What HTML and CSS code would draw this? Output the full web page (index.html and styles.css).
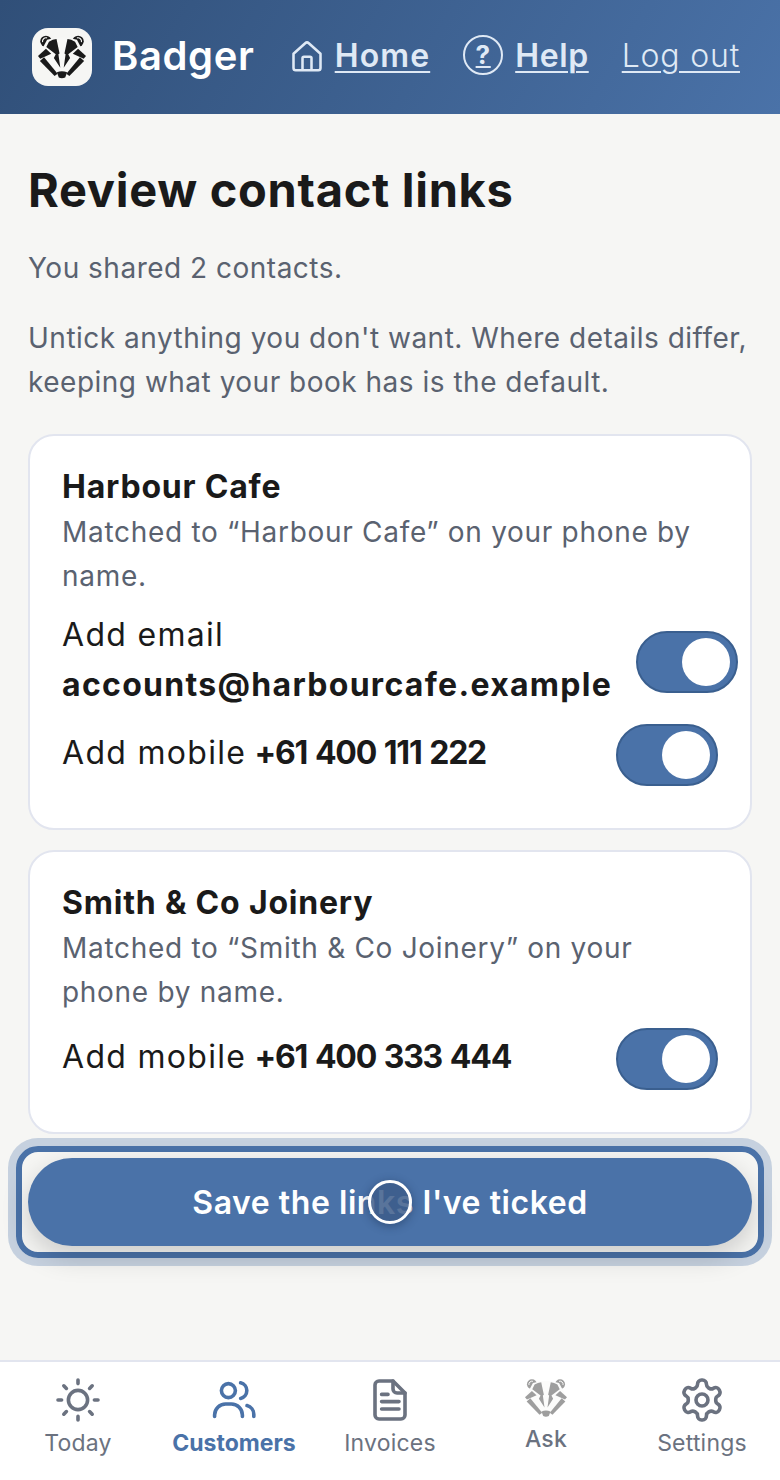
FILE: index.html
```html
<!DOCTYPE html>
<html lang="en">
<head>
    <meta charset="UTF-8">
    <meta name="viewport" content="width=device-width, initial-scale=1.0">
    <title>Badger - Review contact links</title>
    <link rel="stylesheet" href="styles.css">
</head>
<body>
    <svg class="defs" width="0" height="0" aria-hidden="true">
        <symbol id="badger" viewBox="0 0 127 115">
            <circle cx="21" cy="16" r="15"/>
            <circle cx="106" cy="16" r="15"/>
            <path class="ear-in" d="M12 18a9.500 9.500 0 0 1 12-11"/>
            <path class="ear-in" d="M115 18a9.500 9.500 0 0 0-12-11"/>
            <path class="head" d="M24 12Q63 0 103 12L118 40 122 56 70 112H57L5 56 9 40Z"/>
            <path d="M29 17Q39 11 49 10L57 48 54 50 59 86 42 60 47 50 22 31Z"/>
            <path d="M98 17Q88 11 78 10L70 48 73 50 68 86 85 60 80 50 105 31Z"/>
            <path d="M21 36 0 55 6 62 35 49Z"/>
            <path d="M106 36 127 55 121 62 92 49Z"/>
            <path d="M5 68 44 108 52 102 16 58Z"/>
            <path d="M122 68 83 108 75 102 111 58Z"/>
            <path d="M50 98Q63 92 77 98L72 112Q63 116 55 112Z"/>
        </symbol>
    </svg>

    <header class="topbar">
        <a class="brand" href="#">
            <span class="brand-logo"><svg width="48" height="44"><use href="#badger"/></svg></span>
            <span class="brand-name">Badger</span>
        </a>
        <nav class="top-links">
            <a class="top-link link-home" href="#">
                <svg class="home-icon" width="36" height="36" viewBox="0 0 24 24"><path d="M3 10.500 10.800 3.500a1.800 1.800 0 0 1 2.400 0L21 10.500V20a1.500 1.500 0 0 1-1.500 1.500h-15A1.500 1.500 0 0 1 3 20Z"/><path d="M9 21.500V13.500a1 1 0 0 1 1-1h4a1 1 0 0 1 1 1v8"/></svg>
                <span class="under">Home</span>
            </a>
            <a class="top-link link-help" href="#">
                <span class="help-ring"><span class="help-mark">?</span></span>
                <span class="under">Help</span>
            </a>
            <a class="top-link top-link-plain" href="#"><span class="under">Log out</span></a>
        </nav>
    </header>

    <main class="page">
        <h1>Review contact links</h1>
        <p class="lead">You shared 2 contacts.</p>
        <p class="lead">Untick anything you don't want. Where details differ, keeping what your book has is the default.</p>

        <section class="card">
            <h2>Harbour Cafe</h2>
            <p class="match">Matched to “Harbour Cafe” on your phone by name.</p>
            <div class="link-row">
                <div class="link-text">Add email <strong>accounts@harbourcafe.example</strong></div>
                <span class="toggle"><span class="knob"></span></span>
            </div>
            <div class="link-row">
                <div class="link-text">Add mobile <strong class="num">+61 400 111 222</strong></div>
                <span class="toggle"><span class="knob"></span></span>
            </div>
        </section>

        <section class="card">
            <h2>Smith &amp; Co Joinery</h2>
            <p class="match">Matched to “Smith &amp; Co Joinery” on your phone by name.</p>
            <div class="link-row">
                <div class="link-text">Add mobile <strong class="num">+61 400 333 444</strong></div>
                <span class="toggle"><span class="knob"></span></span>
            </div>
        </section>

        <div class="save-focus">
            <button class="save-btn" type="button">Save the links I've ticked</button>
            <span class="touch-dot"></span>
        </div>
    </main>

    <nav class="tabbar">
        <a class="tab" href="#">
            <svg class="tab-icon" viewBox="0 0 24 24"><circle cx="12" cy="12" r="4.800"/><path d="M12 2v1.800M12 20.200v1.800M2 12h1.800M20.200 12H22M4.900 4.900l1.300 1.300M17.800 17.800l1.300 1.300M4.900 19.100l1.300-1.300M17.800 6.200l1.300-1.300"/></svg>
            <span>Today</span>
        </a>
        <a class="tab tab-on" href="#">
            <svg class="tab-icon" viewBox="0 0 24 24"><circle cx="9.200" cy="7.300" r="3.500"/><path d="M2.300 20.200v-.7a5.500 5.500 0 0 1 5.500-5.500h2.900a5.500 5.500 0 0 1 5.500 5.500v.7"/><path d="M15.300 3.400a4 4 0 0 1 0 7.800"/><path d="M18.500 14.800a4.500 4.500 0 0 1 3.400 4.400v1"/></svg>
            <span>Customers</span>
        </a>
        <a class="tab" href="#">
            <svg class="tab-icon" viewBox="0 0 24 24"><path d="M6.500 2.500h7l6 6v11a2 2 0 0 1-2 2h-11a2 2 0 0 1-2-2v-15a2 2 0 0 1 2-2Z"/><path d="M13.500 2.500v4a2 2 0 0 0 2 2h4"/><path d="M7.800 9.200H11M7.800 12.800h8.700M7.800 16.500h8.700"/></svg>
            <span>Invoices</span>
        </a>
        <a class="tab tab-ask" href="#">
            <svg class="ask-icon" width="42" height="40"><use href="#badger"/></svg>
            <span>Ask</span>
        </a>
        <a class="tab" href="#">
            <svg class="tab-icon" viewBox="0 0 24 24"><path d="M12.220 2h-.44a2 2 0 0 0-2 2v.18a2 2 0 0 1-1 1.730l-.43.250a2 2 0 0 1-2 0l-.15-.08a2 2 0 0 0-2.730.730l-.22.380a2 2 0 0 0 .73 2.730l.15.100a2 2 0 0 1 1 1.720v.510a2 2 0 0 1-1 1.740l-.15.090a2 2 0 0 0-.73 2.730l.22.380a2 2 0 0 0 2.730.730l.15-.08a2 2 0 0 1 2 0l.43.250a2 2 0 0 1 1 1.730V20a2 2 0 0 0 2 2h.44a2 2 0 0 0 2-2v-.18a2 2 0 0 1 1-1.730l.43-.25a2 2 0 0 1 2 0l.15.080a2 2 0 0 0 2.730-.73l.22-.39a2 2 0 0 0-.73-2.730l-.15-.08a2 2 0 0 1-1-1.740v-.5a2 2 0 0 1 1-1.740l.15-.09a2 2 0 0 0 .73-2.730l-.22-.38a2 2 0 0 0-2.730-.73l-.15.08a2 2 0 0 1-2 0l-.43-.25a2 2 0 0 1-1-1.730V4a2 2 0 0 0-2-2Z"/><circle cx="12" cy="12" r="3"/></svg>
            <span>Settings</span>
        </a>
    </nav>
</body>
</html>
```

FILE: styles.css
```css
* {
    box-sizing: border-box;
}

html, body {
    margin: 0;
    height: 100%;
}

body {
    display: flex;
    flex-direction: column;
    height: 1480px;
    overflow: hidden;
    font-family: Inter, "Noto Sans", sans-serif;
    background: #f6f6f4;
    color: #1a1a1a;
}

a {
    color: inherit;
    text-decoration: none;
}

.defs {
    position: absolute;
}

#badger path, #badger circle {
    fill: #1a1a1a;
}

#badger .head {
    fill: #f8f8f6;
}

#badger .ear-in {
    fill: none;
    stroke: #f6f6f4;
    stroke-width: 3;
}

/* top bar */
.topbar {
    display: flex;
    align-items: center;
    height: 114px;
    padding: 0 40px 0 32px;
    background: linear-gradient(120deg, #304f78 0%, #4a72a8 100%);
    color: #fff;
}

.brand {
    display: flex;
    align-items: center;
    gap: 20px;
    font-size: 40px;
    font-weight: 600;
    letter-spacing: 0.6px;
}

.brand-name {
    margin-bottom: 3px;
}

.brand-logo {
    display: flex;
    align-items: center;
    justify-content: center;
    width: 60px;
    height: 58px;
    border-radius: 16px;
    background: #f6f6f4;
}

.top-links {
    display: flex;
    align-items: center;
    margin-left: auto;
    margin-bottom: 4px;
    gap: 33px;
    color: #dfe9f5;
    font-size: 32px;
    font-weight: 600;
}

.top-link {
    display: flex;
    align-items: center;
    gap: 12px;
}

.link-home {
    gap: 10px;
    letter-spacing: 1.100px;
}

.link-help {
    letter-spacing: 0.6px;
}

.top-link-plain {
    font-weight: 300;
    letter-spacing: 0.8px;
}

.under {
    text-decoration: underline;
    text-decoration-thickness: 2px;
    text-underline-offset: 4px;
}

.home-icon {
    margin-top: 2px;
    fill: none;
    stroke: #dfe9f5;
    stroke-width: 1.700;
    stroke-linejoin: round;
}

.help-ring {
    display: flex;
    align-items: center;
    justify-content: center;
    width: 40px;
    height: 40px;
    border: 2px solid #dfe9f5;
    border-radius: 50%;
}

.help-mark {
    font-size: 26px;
    font-weight: 700;
    line-height: 26px;
    text-decoration: underline;
    text-decoration-thickness: 2px;
    text-underline-offset: 2px;
    text-decoration-skip-ink: none;
}

/* page */
.page {
    flex: 1;
    padding: 50px 28px 0;
}

h1 {
    margin: 0 0 30px;
    font-size: 47px;
    line-height: 52px;
    font-weight: 700;
    letter-spacing: 0.7px;
}

.lead {
    margin: 0 0 26px;
    font-size: 28px;
    line-height: 44px;
    letter-spacing: 0.5px;
    color: #5a6270;
}

.lead + .card {
    margin-top: 30px;
}

.card {
    padding: 32px 32px 42px;
    background: #fff;
    border: 2px solid #e2e5ef;
    border-radius: 26px;
}

.card + .card {
    margin-top: 20px;
}

.card h2 {
    margin: 0 0 4px;
    font-size: 32px;
    line-height: 38px;
    font-weight: 700;
    letter-spacing: 0.8px;
}

.match {
    margin: 0;
    font-size: 28px;
    line-height: 44px;
    letter-spacing: 0.7px;
    color: #5a6270;
}

.link-row {
    display: flex;
    align-items: center;
    justify-content: space-between;
    gap: 24px;
    margin-top: 14px;
    font-size: 32px;
    line-height: 50px;
    letter-spacing: 1.300px;
}

.link-row + .link-row {
    margin-top: 12px;
}

.link-text {
    margin: -2px 0 2px;
}

.link-row strong {
    font-weight: 700;
}

.link-row .num {
    margin-left: -2px;
    letter-spacing: -1.250px;
    word-spacing: 1.500px;
}

.toggle {
    flex-shrink: 0;
    display: flex;
    justify-content: flex-end;
    align-items: center;
    width: 102px;
    height: 62px;
    padding: 0 6px;
    background: #4a72a8;
    border: 2px solid #3a5f8f;
    border-radius: 31px;
}

.knob {
    width: 48px;
    height: 48px;
    border-radius: 50%;
    background: #fff;
}

/* save button with focus ring */
.save-focus {
    position: relative;
    margin: 12px -12px 0;
    padding: 6px;
    border: 6px solid #4a72a8;
    border-radius: 22px;
    box-shadow: 0 0 0 8px rgba(74, 114, 168, 0.28);
}

.save-btn {
    display: block;
    width: 100%;
    height: 88px;
    border: 0;
    border-radius: 44px;
    background: #4a72a8;
    color: #fff;
    font-family: inherit;
    font-size: 32px;
    font-weight: 600;
    letter-spacing: 0.55px;
    box-shadow: 0 10px 28px rgba(0, 0, 0, 0.18);
}

.touch-dot {
    position: absolute;
    left: 50%;
    top: 50%;
    width: 44px;
    height: 44px;
    margin: -22px 0 0 -22px;
    border: 3px solid #fff;
    border-radius: 50%;
    background: rgba(60, 92, 138, 0.85);
    box-shadow: 0 2px 10px rgba(20, 40, 70, 0.45);
}

/* bottom tabs */
.tabbar {
    display: grid;
    grid-template-columns: repeat(5, 1fr);
    height: 120px;
    padding-top: 14px;
    background: #fff;
    border-top: 2px solid #e2e5ef;
}

.tab {
    display: flex;
    flex-direction: column;
    align-items: center;
    color: #6b7280;
    font-size: 23px;
    line-height: 32px;
    letter-spacing: 0.2px;
}

.tab-icon {
    display: block;
    width: 48px;
    height: 48px;
    margin-bottom: 3px;
    fill: none;
    stroke: currentColor;
    stroke-width: 1.800;
    stroke-linecap: round;
    stroke-linejoin: round;
}

.tab-on {
    color: #4a72a8;
    font-weight: 700;
    letter-spacing: 0;
}

.ask-icon {
    display: block;
    margin: 2px 0 5px;
    opacity: 0.42;
}

.tab-ask {
    font-weight: 500;
}
```
